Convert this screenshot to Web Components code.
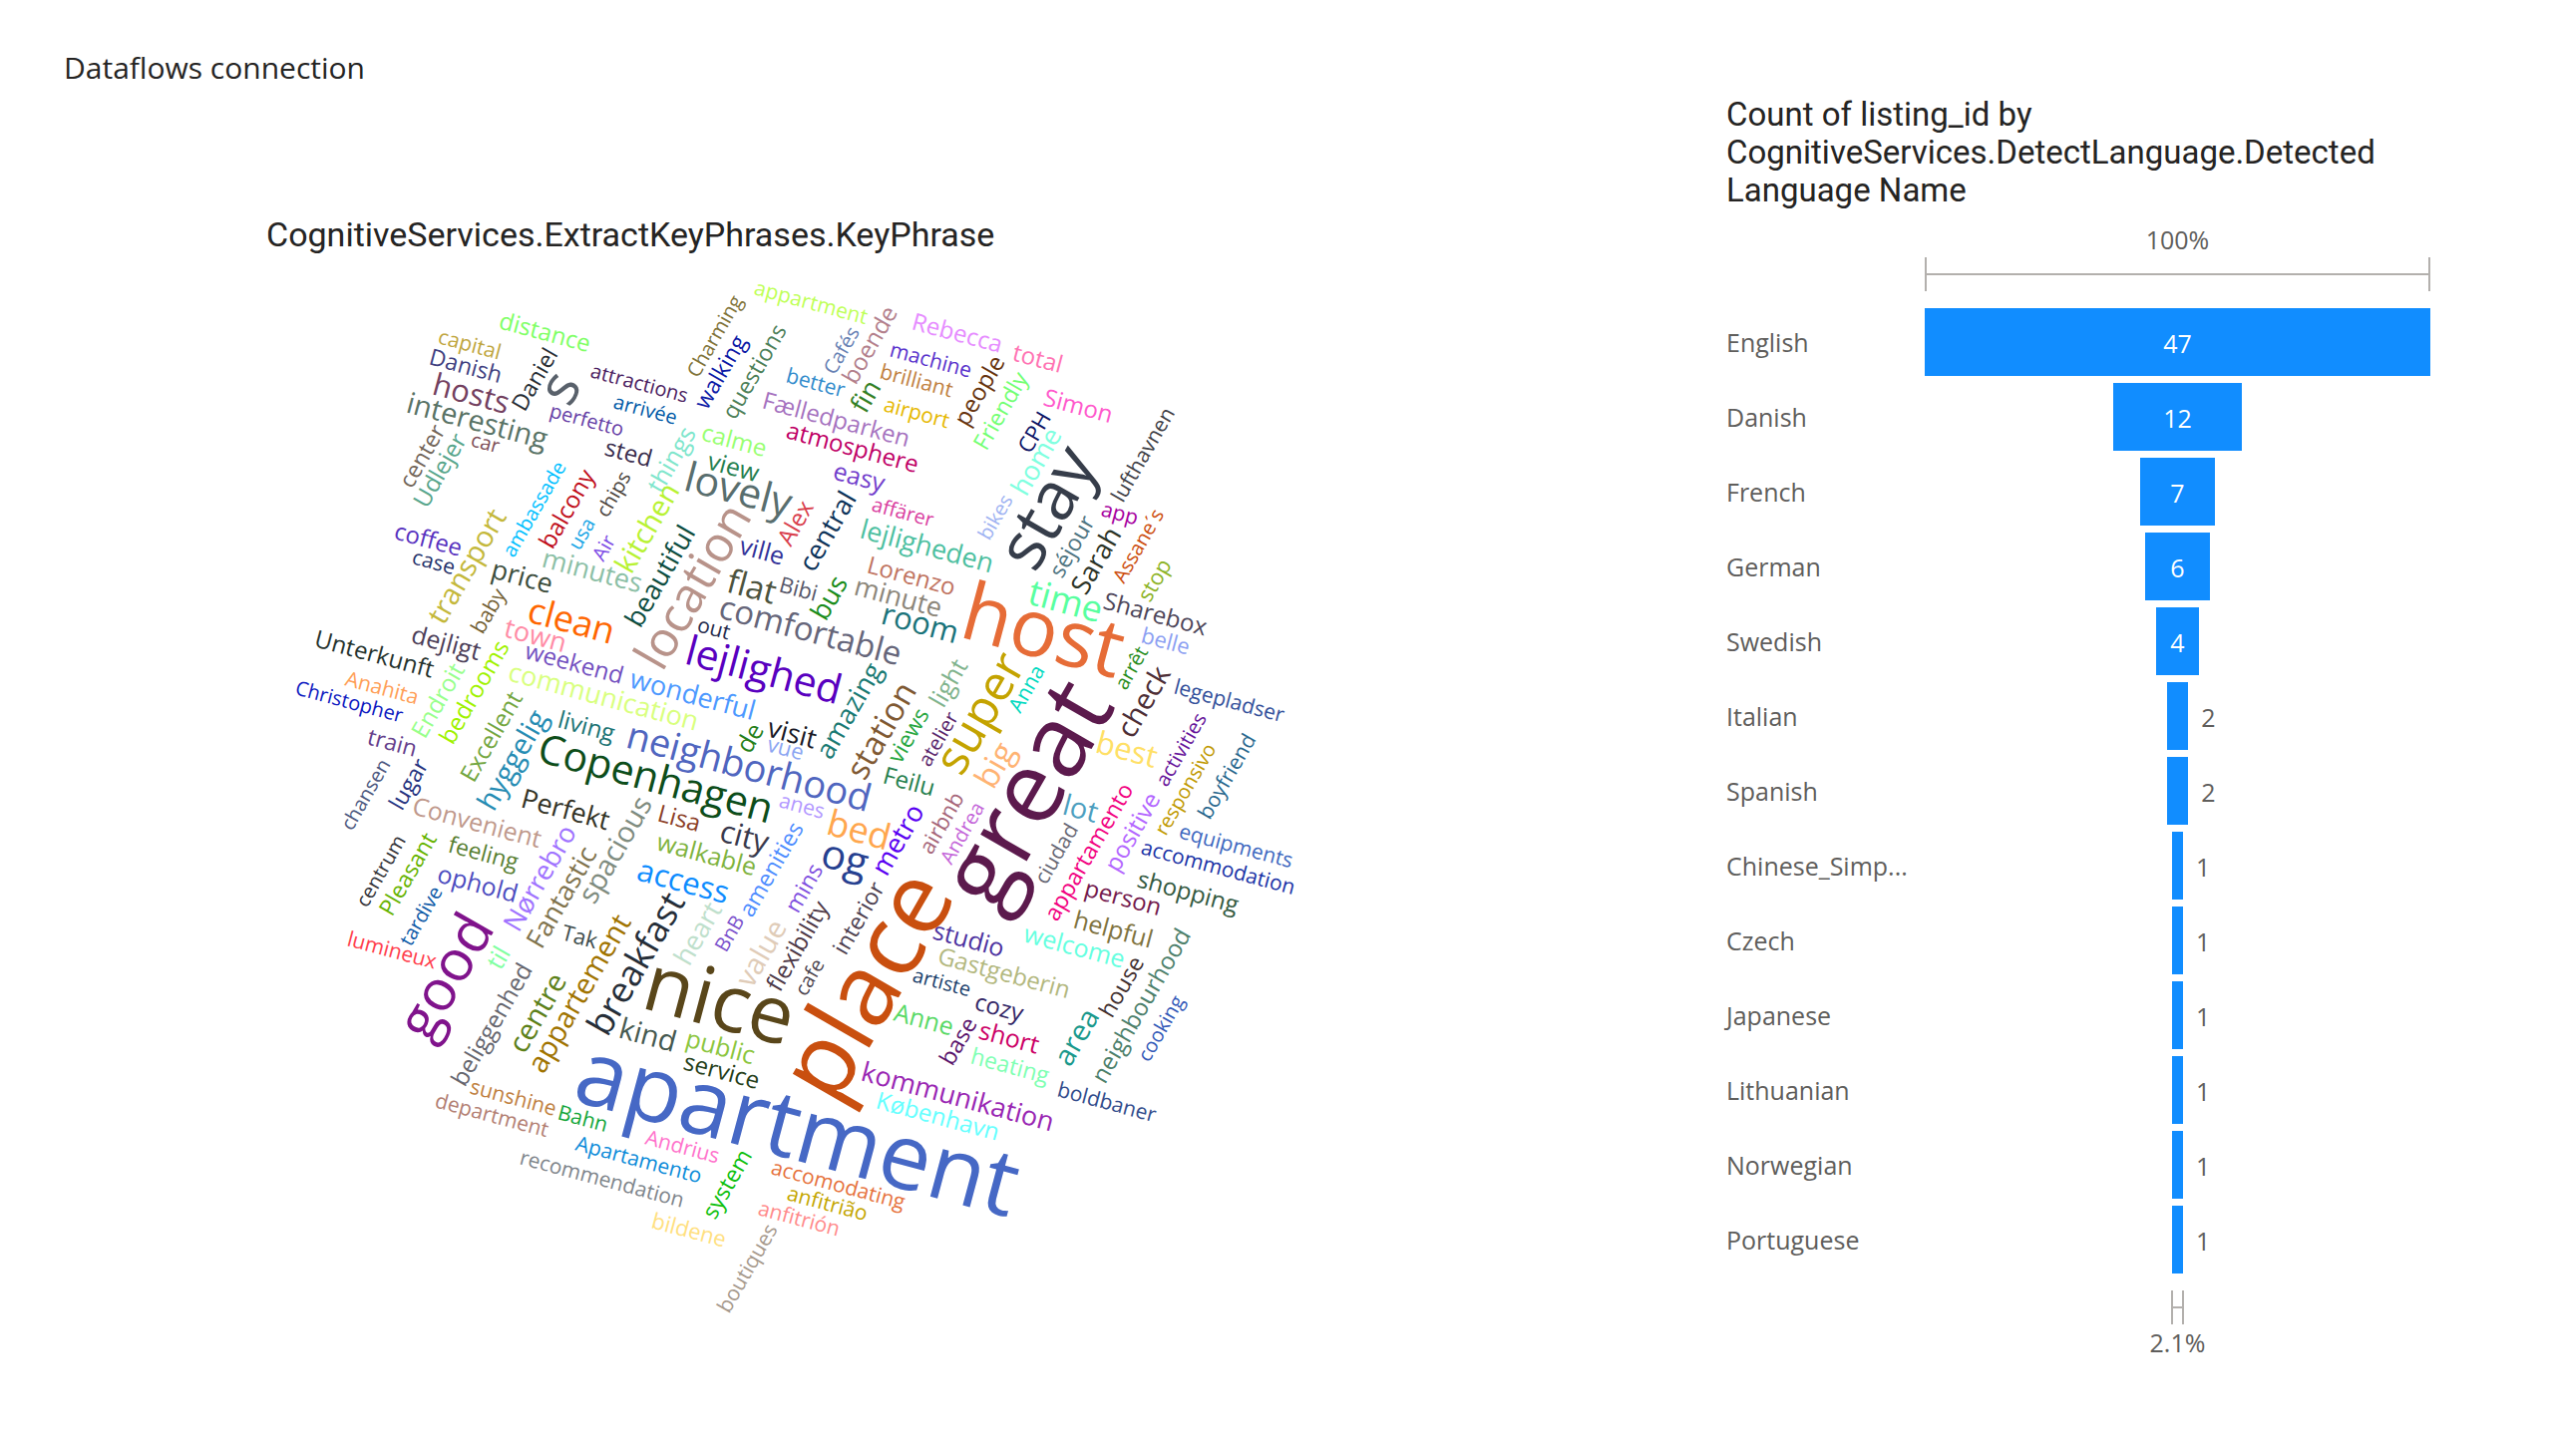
<!DOCTYPE html>
<html lang="en">
<head>
<meta charset="utf-8">
<title>Dataflows connection</title>
<style>
  body { margin: 0; background: #fff; font-family: "Open Sans", "Noto Sans", sans-serif; color: #252423; }
</style>
</head>
<body>
<report-page>
  <span slot="title">Dataflows connection</span>
  <word-cloud slot="cloud">CognitiveServices.ExtractKeyPhrases.KeyPhrase</word-cloud>
  <funnel-chart slot="funnel">Count of listing_id by CognitiveServices.DetectLanguage.Detected Language Name</funnel-chart>
</report-page>

<script>
class ReportPage extends HTMLElement {
  constructor() {
    super();
    this.attachShadow({ mode: 'open' }).innerHTML = `
      <style>
        :host { display: block; }
        main {
          display: grid;
          grid-template-columns: 1600fr 706fr;
          column-gap: 67px;
          padding: 46px 123px 46px 64px;
          align-items: start;
        }
        h1 { margin: 0; font-size: 30px; font-weight: 400; line-height: 44px; }
        .left { display: flex; flex-direction: column; gap: 125px; }
        .right { padding-top: 50px; }
      </style>
      <main>
        <div class="left"><h1><slot name="title"></slot></h1><slot name="cloud"></slot></div>
        <div class="right"><slot name="funnel"></slot></div>
      </main>`;
  }
}

/* Word positions, tile by tile. Each tile has its origin on the 2560 x 1460 page
   and counts in thirds of a pixel. A word is text, start of its baseline,
   far edge of its last letter, colour, and 1 when it climbs at 60 degrees;
   every other word falls at 15 degrees. */
const TILES = [
  [280, 270, [
    ['distance', 660, 177, 927, 245, '#80ff66'], ['capital', 480, 223, 656, 267, '#bfa640'],
    ['Danish', 450, 287, 660, 339, '#40407f'], ['hosts', 466, 377, 680, 430, '#73405f'],
    ['interesting', 380, 430, 800, 543, '#597366'], ['Daniel', 742, 427, 845, 262, '#262c33', 1],
    ['s', 879, 412, 911, 357, '#59616b', 1], ['attractions', 932, 323, 1225, 400, '#4b2161'],
    ['arrivée', 1003, 416, 1188, 463, '#0059a6'], ['perfetto', 812, 444, 1030, 500, '#6640a6'],
    ['sted', 977, 558, 1110, 590, '#3a2e4d'], ['car', 577, 533, 662, 530, '#805059'],
    ['center', 400, 660, 500, 487, '#73665a', 1], ['Udlejer', 447, 718, 565, 515, '#59a68c', 1],
    ['ambassade', 710, 862, 862, 600, '#00bfff', 1], ['balcony', 825, 838, 918, 603, '#bf0d1a', 1],
    ['usa', 906, 843, 948, 766, '#1aa6e6', 1], ['Air', 975, 880, 982, 800, '#8050e6', 1],
    ['chips', 990, 745, 1045, 622, '#4d4640', 1], ['coffee', 345, 812, 541, 862, '#5933bf'],
    ['case', 400, 886, 520, 915, '#26336b'], ['transport', 497, 1070, 683, 745, '#c4b83b', 1],
    ['price', 635, 929, 812, 975, '#3c4d3c'], ['minutes', 792, 897, 1082, 971, '#8cbfa6']
  ]],
  [620, 270, [
    ['Charming', 243, 322, 335, 75, '#80733a', 1], ['walking', 265, 428, 365, 203, '#0d1aa6', 1],
    ['questions', 352, 455, 485, 172, '#4d8059', 1], ['appartment', 412, 76, 741, 162, '#bfff59'],
    ['Cafés', 655, 316, 706, 180, '#6680b3', 1], ['boende', 715, 347, 825, 120, '#b37f8c', 1],
    ['Rebecca', 883, 180, 1145, 247, '#e68cff'], ['machine', 817, 261, 1053, 320, '#5933cc'],
    ['brilliant', 787, 329, 998, 384, '#bf8040'], ['better', 506, 340, 680, 352, '#338ccc'],
    ['fin', 743, 438, 792, 360, '#338026', 1], ['people', 1052, 472, 1143, 272, '#66330d', 1],
    ['airport', 798, 428, 988, 478, '#e6b800'], ['Fælledparken', 435, 418, 862, 532, '#a673bf'],
    ['calme', 250, 515, 438, 562, '#99ff73'], ['atmosphere', 507, 509, 891, 610, '#bf0066'],
    ['view', 263, 600, 425, 605, '#268050'], ['things', 127, 680, 215, 478, '#80e6cc', 1],
    ['lovely', 207, 667, 522, 690, '#596e6e'], ['easy', 645, 630, 808, 632, '#7340cc'],
    ['central', 589, 915, 718, 690, '#0d3359', 1], ['affärer', 763, 727, 950, 745, '#d9409f'],
    ['lejligheden', 725, 808, 1120, 912, '#4dbfa0'], ['Lorenzo', 750, 913, 1003, 975, '#bf7360'],
    ['Alex', 518, 838, 588, 716, '#d9404d', 1], ['ville', 361, 856, 490, 888, '#333399'],
    ['flat', 322, 970, 462, 1007, '#4d5440'], ['Bibi', 488, 972, 588, 998, '#59596b'],
    ['bus', 628, 1057, 680, 940, '#1a8c1a', 1], ['minute', 710, 978, 963, 1045, '#8c867a'],
    ['kitchen', 45, 912, 195, 682, '#b8f233', 1], ['beautiful', 70, 1075, 228, 800, '#0d4d40', 1]
  ]],
  [960, 270, [
    ['total', 163, 274, 303, 310, '#ff73b3'], ['Friendly', 90, 544, 182, 303, '#73ff73', 1],
    ['Simon', 258, 407, 458, 460, '#ff59cc'], ['CPH', 222, 555, 282, 451, '#0d1466', 1],
    ['home', 207, 685, 306, 493, '#80ffe0', 1], ['stay', 240, 910, 330, 525, '#363d4a', 1],
    ['lufthavnen', 502, 698, 653, 438, '#404046', 1], ['app', 430, 741, 538, 750, '#a6009f'],
    ['bikes', 98, 815, 158, 690, '#a0b3f2', 1], ['séjour', 318, 928, 380, 740, '#4d7380', 1],
    ['Sarah', 392, 978, 492, 805, '#2b3326', 1], ['Assane´s', 500, 948, 613, 736, '#cc4d0d', 1],
    ['time', 208, 1006, 422, 1056, '#59ffa0'], ['Sharebox', 442, 1021, 740, 1098, '#4d4659'],
    ['stop', 580, 1002, 632, 886, '#8cb326', 1]
  ]],
  [280, 610, [
    ['baby', 615, 78, 670, -52, '#736033', 1], ['clean', 745, 41, 992, 106, '#ff6600'],
    ['Unterkunft', 104, 115, 459, 208, '#26332e'], ['dejligt', 396, 102, 601, 153, '#4d4059'],
    ['Anahita', 192, 229, 411, 282, '#ff9f59'], ['Christopher', 47, 258, 378, 310, '#0d1abf'],
    ['train', 262, 408, 404, 446, '#663f8c'], ['Endroit', 440, 390, 554, 180, '#99ff8c', 1],
    ['bedrooms', 525, 408, 682, 112, '#a0f200', 1], ['town', 672, 85, 849, 131, '#ff8ca6'],
    ['weekend', 735, 151, 1026, 228, '#7350bf'], ['communication', 685, 217, 1249, 368, '#d9ff80'],
    ['Excellent', 590, 522, 722, 265, '#73a640', 1], ['hyggelig', 650, 607, 787, 315, '#268cb3', 1],
    ['living', 838, 359, 1008, 372, '#1a7373'], ['Copenhagen', 780, 463, 1461, 643, '#0d4d1a'],
    ['lugar', 372, 608, 420, 450, '#26337f', 1], ['chansen', 222, 670, 333, 472, '#4d5980', 1],
    ['Convenient', 403, 621, 776, 718, '#bf998c'], ['Perfekt', 730, 600, 986, 668, '#333326'],
    ['feeling', 503, 732, 722, 752, '#598033'], ['centrum', 265, 898, 376, 700, '#333338', 1],
    ['Pleasant', 343, 926, 469, 689, '#66b300', 1], ['ophold', 473, 822, 706, 882, '#4d4dbf'],
    ['tardive', 398, 1018, 483, 853, '#0d59a6', 1], ['lumineux', 210, 1017, 464, 1085, '#ff404d'],
    ['Nørrebro', 725, 970, 879, 670, '#a073ff', 1], ['Fantastic', 795, 1020, 943, 738, '#80734d', 1],
    ['spacious', 948, 893, 1112, 580, '#7f8c80', 1], ['Tak', 845, 997, 948, 1024, '#404d4d']
  ]],
  [620, 610, [
    ['room', 795, 48, 1008, 102, '#1a737a'], ['comfortable', 298, 27, 843, 168, '#66667a'],
    ['out', 235, 69, 329, 93, '#262c4d'], ['location', 137, 190, 402, -272, '#b8938a', 1],
    ['wonderful', 30, 237, 399, 335, '#4d99ff'], ['lejlighed', 203, 168, 651, 287, '#5900bf'],
    ['de', 398, 438, 428, 360, '#26801a', 1], ['visit', 442, 383, 589, 414, '#1a1a26'],
    ['vue', 442, 430, 548, 455, '#8ca6f2'], ['neighborhood', 30, 420, 734, 608, '#5066bf'],
    ['amazing', 641, 455, 768, 171, '#1a7a73', 1], ['station', 745, 515, 893, 255, '#7f5933', 1],
    ['light', 983, 297, 1046, 170, '#80b38c', 1], ['views', 850, 470, 929, 318, '#26a640', 1],
    ['atelier', 938, 475, 995, 315, '#59266b', 1], ['Feilu', 797, 528, 938, 564, '#26804d'],
    ['anes', 485, 597, 613, 628, '#b399ff'], ['Lisa', 120, 641, 236, 668, '#8c4026'],
    ['city', 306, 700, 453, 690, '#3a3a4d'], ['walkable', 113, 728, 403, 803, '#80b340'],
    ['amenities', 402, 932, 544, 656, '#4d8cff', 1], ['bed', 632, 680, 798, 724, '#ffa64d'],
    ['og', 610, 775, 753, 742, '#264090'], ['metro', 812, 803, 908, 610, '#5900f2', 1],
    ['mins', 542, 917, 604, 780, '#7f50e0', 1], ['access', 55, 816, 319, 880, '#0d8cff'],
    ['interior', 686, 1043, 770, 823, '#4d3f50', 1], ['airbnb', 942, 742, 1029, 562, '#a6667a', 1],
    ['Andrea', 1002, 773, 1095, 598, '#c466d9', 1], ['BnB', 328, 1035, 360, 930, '#7a50cc', 1],
    ['heart', 215, 1077, 307, 902, '#bfe0cc', 1], ['studio', 945, 993, 1148, 1047, '#4d33a0']
  ]],
  [960, 610, [
    ['host', 17, 90, 472, 212, '#e66c37'], ['great', 117, 917, 463, 295, '#5c1a4d', 1],
    ['super', 20, 498, 140, 137, '#c4a300', 1], ['Anna', 188, 318, 257, 188, '#00d9c0', 1],
    ['belle', 553, 102, 688, 136, '#8ca0f2'], ['arrêt', 508, 245, 569, 130, '#268c1a', 1],
    ['check', 532, 392, 640, 195, '#4d2e36', 1], ['legepladser', 655, 256, 982, 310, '#33509a'],
    ['best', 418, 433, 591, 478, '#ffe066'], ['activities', 630, 541, 742, 325, '#66139a', 1],
    ['responsivo', 628, 687, 768, 415, '#bf9900', 1], ['boyfriend', 763, 633, 896, 400, '#26668c', 1],
    ['equipments', 668, 690, 1001, 778, '#4069bf'], ['accommodation', 553, 738, 1004, 860, '#1a33a6'],
    ['shopping', 540, 839, 847, 880, '#335940'], ['person', 383, 865, 599, 922, '#731a4d'],
    ['helpful', 352, 963, 571, 1022, '#807340'], ['welcome', 198, 1002, 493, 1079, '#66ffe0'],
    ['lot', 317, 620, 413, 645, '#4d9fbf'], ['positive', 487, 792, 598, 570, '#b366ff', 1],
    ['ciudad', 270, 830, 359, 668, '#666673', 1], ['appartamento', 300, 945, 519, 534, '#f20080', 1],
    ['big', 113, 543, 147, 412, '#ffb373', 1]
  ]],
  [380, 950, [
    ['good', 150, 290, 345, -48, '#80138c', 1], ['til', 366, 71, 394, 19, '#80ffa0', 1],
    ['Bahn', 540, 519, 676, 554, '#13a63a'], ['sunshine', 275, 438, 524, 501, '#bf8040'],
    ['department', 170, 480, 503, 568, '#b38073'], ['Apartamento', 588, 608, 959, 705, '#0d8cd9'],
    ['Andrius', 800, 592, 1016, 649, '#ff73cc'], ['recommendation', 428, 653, 904, 778, '#80868c'],
    ['system', 1012, 818, 1120, 628, '#0dbf0d', 1], ['bildene', 822, 844, 1031, 896, '#ffe080'],
    ['boutiques', 1058, 1097, 1189, 845, '#a6998c', 1], ['kind', 725, 272, 876, 311, '#465950'],
    ['public', 921, 299, 1121, 349, '#8cc640'], ['service', 915, 368, 1136, 423, '#26401a'],
    ['centre', 440, 320, 552, 97, '#5c8019', 1], ['appartement', 495, 385, 760, -80, '#a07300', 1],
    ['breakfast', 693, 265, 912, -140, '#262e38', 1], ['beliggenhed', 260, 418, 461, 68, '#66666e', 1],
    ['apartment', 583, 460, 1895, 805, '#4668c5'], ['nice', 797, 185, 1238, 215, '#59461a']
  ]],
  [720, 950, [
    ['place', 359, 470, 595, -222, '#c94f0f', 1], ['value', 100, 130, 191, -70, '#e0ccb8', 1],
    ['flexibility', 187, 136, 310, -135, '#4d3846', 1], ['cafe', 266, 145, 311, 49, '#4d4650', 1],
    ['Gastgeberin', 658, 48, 1049, 153, '#b3b87f'], ['artiste', 582, 103, 753, 148, '#1a406b'],
    ['cozy', 770, 188, 920, 190, '#332666'], ['Anne', 525, 220, 696, 264, '#59d966'],
    ['base', 706, 356, 768, 225, '#59136b', 1], ['short', 785, 273, 956, 318, '#cc0066'],
    ['heating', 758, 349, 1003, 358, '#80ffb3'], ['kommunikation', 432, 399, 999, 550, '#9926b3'],
    ['København', 475, 483, 833, 578, '#66ffff'], ['area', 1062, 358, 1143, 210, '#1a998c', 1],
    ['house', 1188, 213, 1273, 42, '#402e2e', 1], ['neighbourhood', 1167, 408, 1420, -30, '#4d806b', 1],
    ['cooking', 1298, 347, 1377, 142, '#3359b8', 1], ['boldbaner', 1023, 449, 1315, 497, '#334d8c'],
    ['accomodating', 157, 680, 562, 762, '#e67340'], ['anfitrião', 207, 760, 441, 820, '#c4a600'],
    ['anfitrión', 120, 804, 356, 867, '#ff8c8c']
  ]]
];

/* Type sizes of the cloud: a word takes the step whose width is nearest to its run. */
const STEPS = [20, 21, 22, 23, 24, 25, 27, 29, 31, 33, 36, 38, 41, 49, 51, 57, 68, 80, 92, 100];

class WordCloud extends HTMLElement {
  constructor() {
    super();
    this.attachShadow({ mode: 'open' }).innerHTML = `
      <style>
        :host { display: block; }
        h2 { margin: 0 0 5px; padding-left: 203px; font: 400 34px/40px "Roboto", sans-serif; }
        svg { display: block; width: 100%; height: auto; overflow: visible; }
        text { font-family: "Open Sans", "Noto Sans", sans-serif; }
      </style>
      <h2><slot></slot></h2>
      <svg viewBox="0 0 1600 1100" role="img" aria-label="Key phrases"></svg>`;
  }
  connectedCallback() {
    const svg = this.shadowRoot.querySelector('svg');
    const pen = document.createElement('canvas').getContext('2d');
    pen.font = '100px "Open Sans", "Noto Sans", sans-serif';
    for (const [ox, oy, words] of TILES) {
      for (const [text, x1, y1, x2, y2, color, climbs] of words) {
        const angle = climbs ? -60 : 15;
        const ux = Math.cos(angle * Math.PI / 180), uy = Math.sin(angle * Math.PI / 180);
        const run = ((x2 - x1) * ux + (y2 - y1) * uy) / 3;
        const m = pen.measureText(text);
        const left = -m.actualBoundingBoxLeft, right = m.actualBoundingBoxRight;
        const wanted = run / (right - left) * 100;
        const size = STEPS.reduce((a, b) => Math.abs(b - wanted) < Math.abs(a - wanted) ? b : a);
        const back = run / 2 - (left + right) / 2 * size / 100;
        const x = Math.round(ox - 64 + x1 / 3 + ux * back), y = Math.round(oy - 260 + y1 / 3 + uy * back);
        const word = document.createElementNS('http://www.w3.org/2000/svg', 'text');
        word.textContent = text;
        word.setAttribute('transform', `translate(${x} ${y}) rotate(${angle})`);
        word.setAttribute('font-size', size);
        word.setAttribute('fill', color);
        svg.append(word);
      }
    }
  }
}

class FunnelChart extends HTMLElement {
  constructor() {
    super();
    const rows = [['English', 47], ['Danish', 12], ['French', 7], ['German', 6], ['Swedish', 4], ['Italian', 2], ['Spanish', 2],
      ['Chinese_Simp...', 1], ['Czech', 1], ['Japanese', 1], ['Lithuanian', 1], ['Norwegian', 1], ['Portuguese', 1]];
    this.attachShadow({ mode: 'open' }).innerHTML = `
      <style>
        :host { display: block; font-size: 25px; line-height: 36px; color: #605e5c; }
        h2 { margin: 0 0 12px; font: 400 33px/38px "Roboto", sans-serif; color: #252423; }
        .scale { margin-left: 199px; display: flex; flex-direction: column; align-items: center; }
        .bracket { box-sizing: border-box; height: 34px; width: 100%; border: solid #b3b0ad; border-width: 0 2px;
          display: flex; align-items: center; }
        .bracket::before { content: ""; flex: 1; height: 2px; background: #b3b0ad; }
        .bracket.last { width: 13px; }
        ul { list-style: none; margin: 17px 0; padding: 0; display: flex; flex-direction: column; gap: 7px; }
      </style>
      <h2><slot></slot></h2>
      <div class="scale"><span>100%</span><div class="bracket"></div></div>
      <ul>${rows.map(([n, v]) => `<li><funnel-row value="${v}" max="47">${n}</funnel-row></li>`).join('')}</ul>
      <div class="scale"><div class="bracket last"></div><span>2.1%</span></div>`;
  }
}

class FunnelRow extends HTMLElement {
  constructor() {
    super();
    this.attachShadow({ mode: 'open' });
  }
  connectedCallback() {
    const value = +this.getAttribute('value'), max = +this.getAttribute('max');
    const inside = value > 3;
    this.shadowRoot.innerHTML = `
      <style>
        :host { display: block; }
        .row { display: grid; grid-template-columns: 199px 1fr; height: 68px; align-items: center; }
        .track { display: grid; grid-template-columns: 1fr ${value / max * 100}% 1fr; height: 100%; }
        .bar { grid-column: 2; background: #118dff; color: #fff; display: flex; align-items: center; justify-content: center; }
        .bar, .out { padding-top: 2px; }
        .out { grid-column: 3; align-self: center; padding-left: 13px; }
      </style>
      <div class="row"><span><slot></slot></span>
        <div class="track"><div class="bar">${inside ? value : ''}</div>${inside ? '' : `<span class="out">${value}</span>`}</div>
      </div>`;
  }
}
customElements.define('funnel-row', FunnelRow);
customElements.define('funnel-chart', FunnelChart);
customElements.define('word-cloud', WordCloud);
customElements.define('report-page', ReportPage);
</script>
</body>
</html>
